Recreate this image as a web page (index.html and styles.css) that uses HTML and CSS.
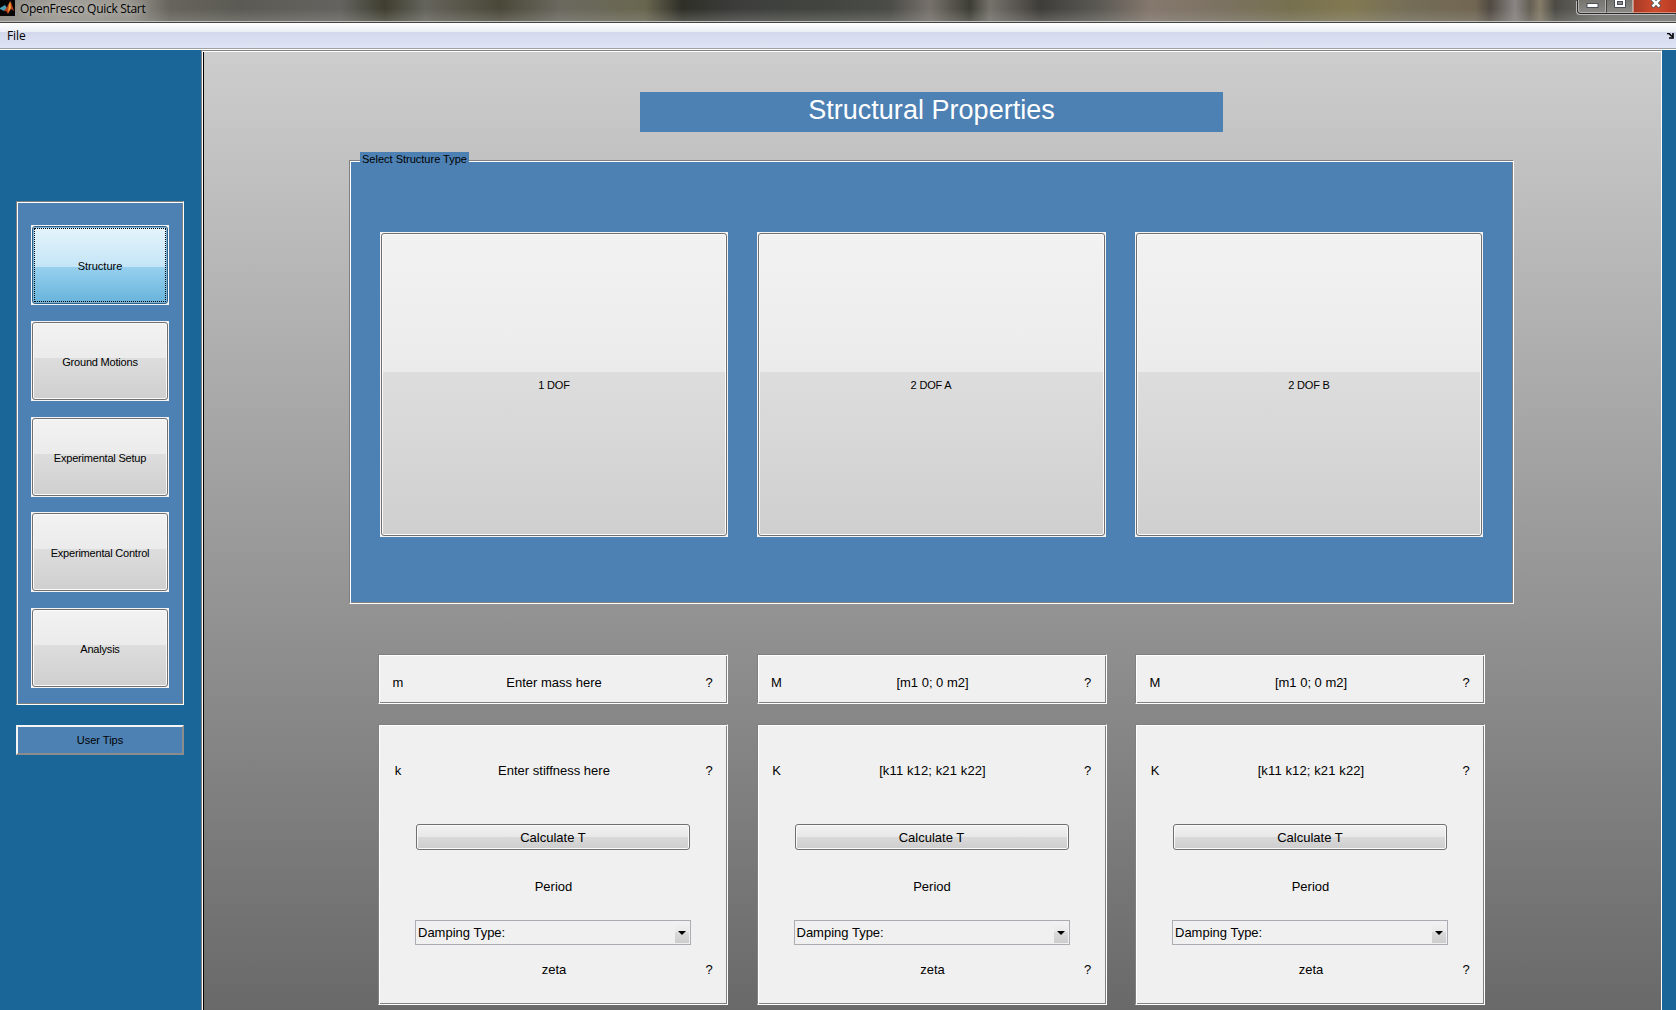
FILE: index.html
```html
<!DOCTYPE html>
<html lang="en">
<head>
<meta charset="utf-8">
<title>OpenFresco Quick Start</title>
<link rel="stylesheet" href="styles.css">
</head>
<body>
<header class="titlebar">
  <svg class="logo" viewBox="0 0 15 16" width="15" height="16">
    <rect width="15" height="16" fill="#050505"/>
    <path d="M0 8 L5 5 L7 8 L4 11 L0 9Z" fill="#4a9fb5"/>
    <path d="M4 11 L7 7 L10 1 L11 2 L14 11 L11 9 L8 14 L6 11Z" fill="#b8401c"/>
    <path d="M9 4 L10.3 2 L11 8 L8 12.5Z" fill="#f4a236"/>
  </svg>
  <h1 class="window-title">OpenFresco Quick Start</h1>
  <div class="controls">
    <span class="control minimize"><svg width="13" height="8" viewBox="0 0 13 8"><rect x="1" y="3.500" width="11" height="4" fill="#fff" stroke="#4b4f58"/></svg></span>
    <span class="control maximize"><svg width="12" height="8" viewBox="0 0 12 8"><path d="M.5 -2V7.500H11.500V-2" fill="#fff" stroke="#4b4f58"/><rect x="3.500" y="1.500" width="5" height="3" fill="#8c8c8c" stroke="#4b4f58"/></svg></span>
    <span class="control close"><svg width="12" height="9" viewBox="0 0 12 9"><path d="M2 -1L10 7M10 -1L2 7" stroke="#4b4f58" stroke-width="4"/><path d="M2 -1L9.500 6.500M10 -1L2.500 6.500" stroke="#fff" stroke-width="2.500"/></svg></span>
  </div>
</header>
<nav class="menubar">
  <span class="menu">File</span>
  <svg class="dock" width="7" height="6" viewBox="0 0 7 6"><path d="M0 .5H2L5 3.500M6 0V5H2" fill="none" stroke="#000" stroke-width="1.600"/></svg>
</nav>
<div class="workspace">
  <aside class="sidebar">
    <div class="nav-panel etched">
      <button class="push nav active">Structure</button>
      <button class="push nav">Ground Motions</button>
      <button class="push nav">Experimental Setup</button>
      <button class="push nav">Experimental Control</button>
      <button class="push nav">Analysis</button>
    </div>
    <button class="tips">User Tips</button>
  </aside>
  <main class="content">
    <h2 class="page-title">Structural Properties</h2>
    <section class="types etched">
      <span class="legend">Select Structure Type</span>
      <button class="push type">1 DOF</button>
      <button class="push type wide">2 DOF A</button>
      <button class="push type">2 DOF B</button>
    </section>
    <div class="columns">
      <section class="column">
        <div class="card mass etched"><div class="row"><span>m</span><span>Enter mass here</span><span>?</span></div></div>
        <div class="card stiff etched">
          <div class="row"><span>k</span><span>Enter stiffness here</span><span>?</span></div>
          <button class="calc">Calculate T</button>
          <div class="period">Period</div>
          <div class="select"><span>Damping Type:</span><i class="arrow"></i></div>
          <div class="row zeta"><span></span><span>zeta</span><span>?</span></div>
        </div>
      </section>
      <section class="column">
        <div class="card mass etched"><div class="row"><span>M</span><span>[m1 0; 0 m2]</span><span>?</span></div></div>
        <div class="card stiff etched">
          <div class="row"><span>K</span><span class="matrix">[k11 k12; k21 k22]</span><span>?</span></div>
          <button class="calc">Calculate T</button>
          <div class="period">Period</div>
          <div class="select"><span>Damping Type:</span><i class="arrow"></i></div>
          <div class="row zeta"><span></span><span>zeta</span><span>?</span></div>
        </div>
      </section>
      <section class="column">
        <div class="card mass etched"><div class="row"><span>M</span><span>[m1 0; 0 m2]</span><span>?</span></div></div>
        <div class="card stiff etched">
          <div class="row"><span>K</span><span class="matrix">[k11 k12; k21 k22]</span><span>?</span></div>
          <button class="calc">Calculate T</button>
          <div class="period">Period</div>
          <div class="select"><span>Damping Type:</span><i class="arrow"></i></div>
          <div class="row zeta"><span></span><span>zeta</span><span>?</span></div>
        </div>
      </section>
    </div>
  </main>
</div>
</body>
</html>
```
FILE: styles.css
```css
* { box-sizing: border-box; }

body {
  margin: 0;
  width: 1676px;
  height: 1010px;
  overflow: hidden;
  display: flex;
  flex-direction: column;
  background: #1a6699;
  color: #000;
  font: 13px/16px "Liberation Sans", Arial, sans-serif;
}

button { margin: 0; padding: 0; font: inherit; color: inherit; }

/* Window chrome */
.titlebar {
  flex: none;
  height: 23px;
  display: flex;
  align-items: flex-start;
  border-bottom: 1px solid #444;
  box-shadow: inset 0 -1px #bdbdbd;
  background:
    linear-gradient(180deg, transparent 40%, rgba(160, 160, 155, .35)),
    linear-gradient(90deg, #8b8983 0, #a5a29b 60px, #96948c 130px, #66645c 170px, #5b5a54 240px, #64635f 340px, #3f3e30 385px, #65645c 425px, #4a4838 500px, #6b695f 560px, #69664f 645px, #2f2f28 682px, #3d3e3c 740px, #434640 830px, #4b4c48 890px, #77716c 930px, #3d3d36 970px, #75726c 990px, #3f3d39 1040px, #5c5a55 1100px, #85786d 1150px, #7c7262 1220px, #77704f 1290px, #827952 1350px, #756d58 1410px, #716652 1475px, #514a42 1490px, #8a8584 1515px, #655f54 1530px, #857b68 1540px, #4c4b45 1555px, #70706d 1600px, #777 1676px);
}
.logo { display: block; }
.window-title {
  margin: 0 0 0 5px;
  font: 12px/17px "Open Sans", "Noto Sans", sans-serif;
  letter-spacing: -.3px;
  text-shadow: 0 0 6px #fff8;
}
.controls {
  margin-left: auto;
  width: 99px;
  height: 14px;
  display: flex;
  border: solid #2b2b2b;
  border-width: 0 0 1px 1px;
  border-radius: 0 0 0 4px;
  box-shadow: -1px 1px #bbb;
}
.control {
  display: flex;
  justify-content: center;
  background: linear-gradient(#77756f, #8b8986);
  border: 1px solid #b5b2ad;
  border-top: 0;
}
.control svg { display: block; }
.minimize { width: 28px; border-bottom-left-radius: 3px; }
.maximize { width: 27px; border-left-color: #444; }
.close { width: 43px; padding-left: 2px; background: linear-gradient(90deg, #a83a26, #d04c2e 50%, #b83a24); border-color: #d78a78; border-right: 0; }

.menubar {
  flex: none;
  height: 27px;
  display: flex;
  justify-content: space-between;
  border-bottom: 1px solid #fff;
  box-shadow: inset 0 -1px #a0a0a0;
  background: linear-gradient(#fff, #eaeff6 9px, #d3d8ec 9px, #dfe5f4 25px);
  font: 12px/16px "Open Sans", "Noto Sans", sans-serif;
}
.menu { margin: 5px 0 0 7px; letter-spacing: -.1px; }
.dock { margin: 10px 2px 0 0; }

/* Two-line etched frame */
.etched {
  border: 1px solid #808080;
  border-right-color: #fff;
  border-bottom-color: #fff;
  box-shadow: inset 1px 1px #fff, inset -1px -1px #808080;
}

.workspace { flex: 1; display: flex; padding-right: 14px; }

.sidebar { width: 201px; padding: 151px 17px 0 16px; font-size: 11px; }
.nav-panel {
  height: 504px;
  padding: 23px 14px 16px;
  display: flex;
  flex-direction: column;
  justify-content: space-between;
  background: #4d80b3;
}
.push {
  display: block;
  border: 1px solid #f4f4f4;
  padding: 2px 0 0;
  background: #f4f4f4;
  position: relative;
  z-index: 0;
  letter-spacing: -.2px;
}
.push::before {
  content: "";
  position: absolute;
  z-index: -1;
  inset: 0;
  border: 1px solid #707070;
  border-radius: 3px;
  box-shadow: inset 0 0 0 1px #fafafa;
  background: linear-gradient(#f2f2f2, #ebebeb 46%, #dddddd 46%, #cfcfcf);
}
.nav { height: 80px; font-size: 11px; }
.active { letter-spacing: 0; }
.active::before {
  border-color: #2c628b;
  box-shadow: inset 0 0 0 1px #7fb4d4;
  background: linear-gradient(#e5f4fc, #c4e5f6 52%, #98d1ef 52%, #68b3db);
}
.active::after {
  content: "";
  position: absolute;
  inset: 2px;
  border: 1px dotted #000;
}
.tips {
  display: block;
  width: 168px;
  height: 30px;
  margin-top: 20px;
  border: 2px solid;
  border-color: #f4f4f4 #8c8c8c #8c8c8c #f4f4f4;
  background: #4d80b3;
  font-size: 11px;
}

.content {
  flex: 1;
  border: solid;
  border-width: 1px 1px 0;
  border-color: #808080;
  box-shadow: inset 1px 1px #fff, inset 2px 0 #000;
  border-right-color: #fff;
  padding-left: 147px;
  background: linear-gradient(#cdcdcd, #696969);
}
.page-title {
  width: 583px;
  height: 40px;
  margin: 41px 0 0 291px;
  background: #4d80b3;
  color: #fff;
  font-size: 27px;
  font-weight: 400;
  letter-spacing: .03px;
  line-height: 37px;
  text-align: center;
}
.types {
  position: relative;
  width: 1165px;
  height: 444px;
  margin-top: 28px;
  padding: 71px 30px 0;
  display: flex;
  justify-content: space-between;
  background: #4d80b3;
}
.legend {
  position: absolute;
  left: 10px;
  top: -9px;
  width: 109px;
  height: 13px;
  padding-left: 2px;
  background: #4d80b3;
  font-size: 11px;
  line-height: 14px;
  white-space: nowrap;
}
.type { width: 348px; height: 305px; padding-top: 1px; font-size: 11px; }
.wide { width: 349px; margin-left: -1px; }

.columns { display: flex; gap: 28.5px; margin: 50px 0 0 29px; }
.column { width: 350px; }
.card { background: #f0f0f0; }
.mass { height: 50px; padding-top: 20px; }
.stiff { height: 281px; margin-top: 20px; padding-top: 38px; }
.row {
  display: grid;
  grid-template-columns: 38px 1fr 36px;
  text-align: center;
}
.matrix { letter-spacing: .12px; }
.calc {
  display: block;
  width: 274px;
  height: 26px;
  margin: 45px 0 0 37px;
  padding-top: 1px;
  border: 1px solid #707070;
  border-radius: 3px;
  box-shadow: inset 0 0 0 1px #fafafa;
  background: linear-gradient(#f2f2f2, #e8e8e8 48%, #dadada 48%, #cdcdcd);
}
.period { margin-top: 29px; padding-left: 1px; text-align: center; }
.select {
  width: 276px;
  height: 25px;
  margin: 25px 0 0 36px;
  display: flex;
  justify-content: space-between;
  border: 1px solid #abadb3;
  padding: 0 1px 0 2px;
  line-height: 23px;
}
.arrow {
  width: 14px;
  margin: 1px 0;
  display: flex;
  align-items: center;
  justify-content: center;
  background: linear-gradient(#f2f2f2, #e8e8e8 50%, #dadada 50%, #cdcdcd);
}
.arrow::before {
  content: "";
  border: 4px solid transparent;
  border-top-color: #000;
  border-bottom: 0;
}
.zeta { margin-top: 17px; }
```
